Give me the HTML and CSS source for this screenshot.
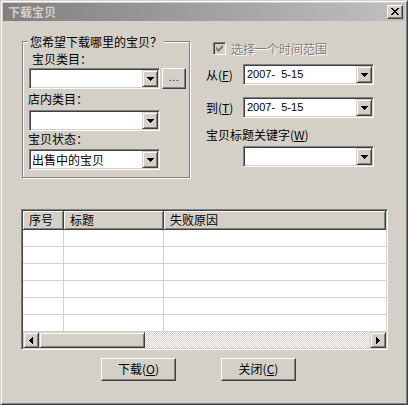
FILE: index.html
```
<!DOCTYPE html>
<html>
<head>
<meta charset="utf-8">
<link rel="stylesheet" href="styles.css">
</head>
<body>
<div class="window">
  <div class="titlebar">
    <span class="title">下载宝贝</span>
    <div class="capbtn"><svg width="8" height="7" viewBox="0 0 8 7" shape-rendering="crispEdges"><path d="M0 0h2v1h-2zM6 0h2v1h-2zM1 1h2v1h-2zM5 1h2v1h-2zM2 2h4v1h-4zM3 3h2v1h-2zM2 4h4v1h-4zM1 5h2v1h-2zM5 5h2v1h-2zM0 6h2v1h-2zM6 6h2v1h-2z" fill="#000"/></svg></div>
  </div>
  <div class="client">
    <div class="top">
      <div class="group">
        <span class="legend">您希望下载哪里的宝贝？</span>
        <div class="lbl l1">宝贝类目：</div>
        <div class="r1">
          <div class="combo"><span class="val"></span><span class="dd"><svg width="7" height="4" viewBox="0 0 7 4" shape-rendering="crispEdges"><path d="M0 0H7V1H6V2H5V3H4V4H3V3H2V2H1V1H0Z"/></svg></span></div>
          <div class="dots">...</div>
        </div>
        <div class="lbl l2">店内类目：</div>
        <div class="combo g2"><span class="val"></span><span class="dd"><svg width="7" height="4" viewBox="0 0 7 4" shape-rendering="crispEdges"><path d="M0 0H7V1H6V2H5V3H4V4H3V3H2V2H1V1H0Z"/></svg></span></div>
        <div class="lbl l3">宝贝状态：</div>
        <div class="combo g3"><span class="val">出售中的宝贝</span><span class="dd"><svg width="7" height="4" viewBox="0 0 7 4" shape-rendering="crispEdges"><path d="M0 0H7V1H6V2H5V3H4V4H3V3H2V2H1V1H0Z"/></svg></span></div>
      </div>
      <div class="right">
        <div class="chkrow">
          <span class="chk"><svg width="7" height="7" viewBox="0 0 7 7" shape-rendering="crispEdges"><path d="M6 0h1v3h-1v1h-1v1h-1v1h-1v1h-1v-1h-1v-1h-1v-3h1v1h1v1h1v-1h1v-1h1v-1h1z" fill="#808080"/></svg></span>
          <span class="dis">选择一个时间范围</span>
        </div>
        <div class="frow from">
          <span class="flabel">从(<u>F</u>)</span>
          <div class="combo"><span class="val date">2007-  5-15</span><span class="dd"><svg width="7" height="4" viewBox="0 0 7 4" shape-rendering="crispEdges"><path d="M0 0H7V1H6V2H5V3H4V4H3V3H2V2H1V1H0Z"/></svg></span></div>
        </div>
        <div class="frow to">
          <span class="flabel">到(<u>T</u>)</span>
          <div class="combo"><span class="val date">2007-  5-15</span><span class="dd"><svg width="7" height="4" viewBox="0 0 7 4" shape-rendering="crispEdges"><path d="M0 0H7V1H6V2H5V3H4V4H3V3H2V2H1V1H0Z"/></svg></span></div>
        </div>
        <div class="klabel">宝贝标题关键字(<u>W</u>)</div>
        <div class="combo kw"><span class="val"></span><span class="dd"><svg width="7" height="4" viewBox="0 0 7 4" shape-rendering="crispEdges"><path d="M0 0H7V1H6V2H5V3H4V4H3V3H2V2H1V1H0Z"/></svg></span></div>
      </div>
    </div>

    <div class="list">
      <div class="lhead">
        <div class="hc c1">序号</div>
        <div class="hc c2">标题</div>
        <div class="hc c3">失败原因</div>
      </div>
      <div class="lrow"><div class="cell c1"></div><div class="cell c2"></div><div class="cell c3"></div></div>
      <div class="lrow"><div class="cell c1"></div><div class="cell c2"></div><div class="cell c3"></div></div>
      <div class="lrow"><div class="cell c1"></div><div class="cell c2"></div><div class="cell c3"></div></div>
      <div class="lrow"><div class="cell c1"></div><div class="cell c2"></div><div class="cell c3"></div></div>
      <div class="lrow"><div class="cell c1"></div><div class="cell c2"></div><div class="cell c3"></div></div>
      <div class="lrow"><div class="cell c1"></div><div class="cell c2"></div><div class="cell c3"></div></div>
      <div class="hscroll">
        <div class="sbtn"><svg width="4" height="7" viewBox="0 0 4 7" shape-rendering="crispEdges"><path d="M4 0V7H3V6H2V5H1V4H0V3H1V2H2V1H3V0Z"/></svg></div>
        <div class="thumb"></div>
        <div class="track"></div>
        <div class="sbtn"><svg width="4" height="7" viewBox="0 0 4 7" shape-rendering="crispEdges"><path d="M0 0V7H1V6H2V5H3V4H4V3H3V2H2V1H1V0Z"/></svg></div>
      </div>
    </div>

    <div class="buttons">
      <div class="pbtn">下载(<u>O</u>)</div>
      <div class="pbtn">关闭(<u>C</u>)</div>
    </div>
  </div>
</div>
</body>
</html>
```
FILE: styles.css
```
html, body {
  margin: 0;
  padding: 0;
  background: #d4d0c8;
}
body {
  font-family: "Noto Sans CJK SC", "Liberation Sans", sans-serif;
  font-size: 12px;
  color: #000;
}
.window {
  width: 408px;
  height: 405px;
  box-sizing: border-box;
  background: #d4d0c8;
  border: 1px solid;
  border-color: #d4d0c8 #404040 #404040 #d4d0c8;
  box-shadow: inset 1px 1px #fff, inset -1px -1px #808080;
  padding: 2px;
  overflow: hidden;
}
.titlebar {
  height: 18px;
  display: flex;
  align-items: center;
  justify-content: space-between;
  background: linear-gradient(to right, #808080, #c0c0c0);
  padding: 0 2px 0 5px;
}
.title {
  color: #d4d0c8;
  font-weight: bold;
  font-size: 12px;
  line-height: 14px;
}
.capbtn {
  width: 16px;
  height: 14px;
  box-sizing: border-box;
  background: #d4d0c8;
  border: 1px solid;
  border-color: #fff #404040 #404040 #fff;
  box-shadow: inset -1px -1px #808080;
  display: flex;
  align-items: center;
  justify-content: center;
  padding: 0 1px 1px 0;
}
.capbtn svg { display: block; }

.client { padding-top: 0; }
.top {
  display: flex;
  align-items: flex-start;
}
.group {
  margin: 20px 0 0 19px;
  width: 168px;
  box-sizing: border-box;
  border: 1px solid #808080;
  box-shadow: inset 1px 1px #fff, 1px 1px #fff;
  padding: 0 0 7px 0;
}
.legend {
  display: block;
  width: fit-content;
  margin: -7px 0 0 5px;
  padding: 0 2px;
  line-height: 14px;
  height: 14px;
  background: #d4d0c8;
}
.lbl {
  line-height: 14px;
  height: 14px;
}
.l1 { margin: 3px 0 0 9px; }
.l2 { margin: 3px 0 0 5px; }
.l3 { margin: 1px 0 0 5px; }
.r1 {
  display: flex;
  margin: 2px 0 0 6px;
  gap: 2px;
}
.combo {
  width: 131px;
  height: 21px;
  box-sizing: border-box;
  border: 1px solid;
  border-color: #808080 #fff #fff #808080;
  box-shadow: inset 1px 1px #404040, inset -1px -1px #d4d0c8;
  background: #fff;
  padding: 1px;
  display: flex;
}
.g2 { margin: 4px 0 0 6px; }
.g3 { margin: 3px 0 0 6px; }
.val {
  flex: 1;
  line-height: 17px;
  padding-left: 1px;
  white-space: pre;
  overflow: hidden;
}
.val.date {
  font-family: "Liberation Sans", sans-serif;
  font-size: 11px;
  padding-left: 2px;
}
.dd {
  width: 16px;
  height: 17px;
  box-sizing: border-box;
  background: #d4d0c8;
  border: 1px solid;
  border-color: #d4d0c8 #404040 #404040 #d4d0c8;
  box-shadow: inset 1px 1px #fff, inset -1px -1px #808080;
  display: flex;
  align-items: center;
  justify-content: center;
}
.dd svg { display: block; }
.dots {
  width: 24px;
  height: 21px;
  box-sizing: border-box;
  background: #d4d0c8;
  border: 1px solid;
  border-color: #fff #404040 #404040 #fff;
  box-shadow: inset -1px -1px #808080;
  font-family: "Liberation Sans", sans-serif;
  font-size: 11px;
  line-height: 17px;
  text-align: center;
  letter-spacing: 0.5px;
}

.right {
  margin: 20px 0 0 16px;
  width: 168px;
}
.chkrow {
  height: 15px;
  display: flex;
  align-items: center;
}
.chk {
  margin-left: 7px;
  width: 13px;
  height: 13px;
  box-sizing: border-box;
  border: 1px solid;
  border-color: #808080 #fff #fff #808080;
  box-shadow: inset 1px 1px #404040, inset -1px -1px #d4d0c8;
  background: #d4d0c8;
  display: flex;
  align-items: center;
  justify-content: center;
}
.chk svg { display: block; }
.dis {
  margin-left: 5px;
  color: #808080;
  text-shadow: 1px 1px #fff;
  line-height: 14px;
}
.frow {
  display: flex;
  align-items: center;
}
.from { margin-top: 8px; }
.to { margin-top: 12px; }
.flabel {
  width: 37px;
  line-height: 14px;
}
.klabel {
  margin-top: 10px;
  line-height: 14px;
  height: 14px;
}
.kw { margin: 4px 0 0 37px; }

.list {
  margin: 31px 0 0 18px;
  width: 367px;
  height: 141px;
  box-sizing: border-box;
  border: 1px solid;
  border-color: #808080 #fff #fff #808080;
  box-shadow: inset 1px 1px #404040, inset -1px -1px #d4d0c8;
  padding: 1px;
  background: #fff;
  display: flex;
  flex-direction: column;
}
.lhead {
  height: 19px;
  display: flex;
  flex: none;
}
.hc {
  box-sizing: border-box;
  background: #d4d0c8;
  border-right: 1px solid #404040;
  border-bottom: 1px solid #404040;
  box-shadow: inset 1px 1px #fff, inset -1px -1px #808080;
  line-height: 18px;
  padding-left: 6px;
}
.c1 { width: 41px; flex: none; }
.c2 { width: 100px; flex: none; }
.c3 { flex: 1; }
.lrow {
  height: 17px;
  box-sizing: border-box;
  border-bottom: 1px solid #d4d0c8;
  display: flex;
  flex: none;
}
.cell.c1, .cell.c2 { border-right: 1px solid #d4d0c8; box-sizing: border-box; }
.hscroll {
  height: 16px;
  display: flex;
  flex: none;
}
.sbtn, .thumb {
  height: 16px;
  box-sizing: border-box;
  background: #d4d0c8;
  border: 1px solid;
  border-color: #d4d0c8 #404040 #404040 #d4d0c8;
  box-shadow: inset 1px 1px #fff, inset -1px -1px #808080;
}
.sbtn {
  width: 16px;
  display: flex;
  align-items: center;
  justify-content: center;
}
.sbtn svg { display: block; }
.thumb { width: 106px; }
.track {
  flex: 1;
  background: repeating-conic-gradient(#fff 0 25%, #d4d0c8 0 50%) 0 0 / 2px 2px;
}

.buttons {
  display: flex;
  gap: 45px;
  margin: 8px 0 0 98px;
}
.pbtn {
  width: 75px;
  height: 23px;
  box-sizing: border-box;
  background: #d4d0c8;
  border: 1px solid;
  border-color: #fff #404040 #404040 #fff;
  box-shadow: inset -1px -1px #808080;
  text-align: center;
  line-height: 20px;
}
```
